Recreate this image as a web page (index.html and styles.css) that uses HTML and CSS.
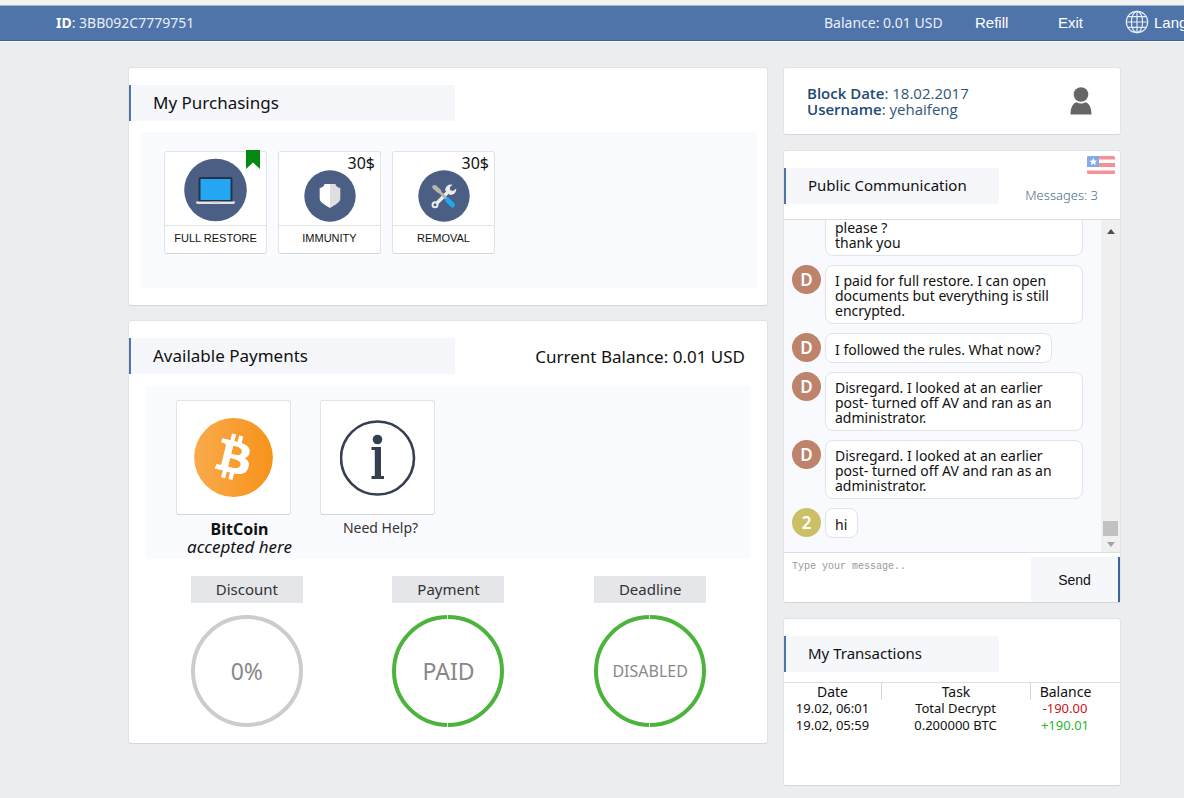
FILE: index.html
```html
<!DOCTYPE html>
<html lang="en">
<head>
<meta charset="utf-8">
<title>My Purchasings</title>
<link rel="stylesheet" href="styles.css">
</head>
<body>
<header class="topbar">
  <p class="account"><strong>ID</strong>: 3BB092C7779751</p>
  <nav class="topnav">
    <span class="balance">Balance: 0.01 USD</span>
    <a class="navlink refill" href="#">Refill</a>
    <a class="navlink exit" href="#">Exit</a>
    <button class="language" type="button">
      <svg width="24" height="24" viewBox="0 0 24 24" fill="none" stroke="#e8eef8" stroke-width="1.2" aria-hidden="true"><circle cx="12" cy="12" r="10.7"/><ellipse cx="12" cy="12" rx="5.6" ry="10.7"/><path d="M12 1.3v21.4M1.3 12h21.4M3 6.6h18M3 17.4h18"/></svg>
      <span>Lang</span>
    </button>
  </nav>
</header>

<main class="page">
  <div class="column main">
    <section class="card purchases">
      <h2 class="title">My Purchasings</h2>
      <div class="goods">
        <button class="good" type="button">
          <span class="pic"><svg width="64" height="64" viewBox="0 0 64 64" aria-hidden="true"><circle cx="31.500" cy="32" r="31.300" fill="#4b5e83"/><rect x="14.500" y="19" width="34" height="25" rx="2" fill="#23344a"/><rect x="16.500" y="21" width="30" height="21" fill="#25a6f2"/><path d="M12 43.500h39v.8q0 1.700-2 1.700h-35q-2 0-2-1.700z" fill="#e4e4e4"/><path d="M26.500 43.500h10v1h-10z" fill="#b9b9b9"/></svg></span>
          <span class="name">FULL RESTORE</span>
          <svg class="flag" width="14" height="19" viewBox="0 0 14 19" aria-hidden="true"><path d="M0 0h14v19l-7-6.500-7 6.500z" fill="#048a14"/></svg>
        </button>
        <button class="good" type="button">
          <span class="pic"><svg width="52" height="52" viewBox="0 0 52 52" aria-hidden="true"><circle cx="26" cy="26" r="25.700" fill="#4b5e83"/><path d="M26 14h-5.500q-.5 3-4.800 4v11q0 3.500 10.300 9z" fill="#fff"/><path d="M26 14h5.500q.5 3 4.800 4v11q0 3.500-10.300 9z" fill="#dfdfdf"/></svg></span>
          <span class="name">IMMUNITY</span>
          <span class="price">30$</span>
        </button>
        <button class="good" type="button">
          <span class="pic"><svg width="52" height="52" viewBox="0 0 52 52" aria-hidden="true"><circle cx="26" cy="26" r="25.700" fill="#4b5e83"/><path d="M18 34 31 21" stroke="#ececec" stroke-width="3.600"/><circle cx="17" cy="34.800" r="2.500" fill="#4b5e83" stroke="#ececec" stroke-width="2"/><path d="M34.500 14.500q-6.500-.8-7.500 5.500l5 5q6.500-.5 6.300-6.500l-3.300 2.500-2.700-.8-.5-2.700z" fill="#ececec"/><path d="m20 20 8.500 9" stroke="#b8b5b1" stroke-width="2.600"/><path d="M14.300 16q2-2 4.500 0l4.200 4 .5 3.500-3.500-.5-4.200-3.500q-2-1.500-1.500-3.500z" fill="#b8b5b1"/><path d="m29.500 30 5 5" stroke="#25a6f2" stroke-width="5" stroke-linecap="round"/></svg></span>
          <span class="name">REMOVAL</span>
          <span class="price">30$</span>
        </button>
      </div>
    </section>

    <section class="card payments">
      <div class="heading">
        <h2 class="title">Available Payments</h2>
        <p class="current">Current Balance: 0.01 USD</p>
      </div>
      <div class="methods">
        <figure class="method">
          <button class="tile" type="button" aria-label="BitCoin">
            <svg width="79" height="79" viewBox="0 0 64 64" aria-hidden="true"><defs><linearGradient id="coin" x1="0" x2="1"><stop offset="0" stop-color="#f9aa4b"/><stop offset="1" stop-color="#f7931a"/></linearGradient></defs><circle cx="32" cy="32" r="31.900" fill="url(#coin)"/><path transform="translate(32 32) scale(.93) translate(-32 -32)" fill="#fff" d="m46.103 27.444c0.637-4.258-2.605-6.547-7.038-8.074l1.438-5.768-3.511-0.875-1.400 5.616c-0.923-0.230-1.871-0.447-2.813-0.662l1.410-5.653-3.509-0.875-1.439 5.766c-0.764-0.174-1.514-0.346-2.242-0.527l0.004-0.018-4.842-1.209-0.934 3.750s2.605 0.597 2.550 0.634c1.422 0.355 1.679 1.296 1.636 2.042l-1.638 6.571c0.098 0.025 0.225 0.061 0.365 0.117-0.117-0.029-0.242-0.061-0.371-0.092l-2.296 9.205c-0.174 0.432-0.615 1.080-1.609 0.834 0.035 0.051-2.552-0.637-2.552-0.637l-1.743 4.019 4.569 1.139c0.850 0.213 1.683 0.436 2.503 0.646l-1.453 5.834 3.507 0.875 1.439-5.772c0.958 0.260 1.888 0.500 2.798 0.726l-1.434 5.745 3.511 0.875 1.453-5.823c5.987 1.133 10.489 0.676 12.384-4.739 1.527-4.360-0.076-6.875-3.226-8.515 2.294-0.529 4.022-2.038 4.483-5.155zm-8.022 11.249c-1.085 4.360-8.426 2.003-10.806 1.412l1.928-7.729c2.380 0.594 10.012 1.770 8.878 6.317zm1.086-11.312c-0.990 3.966-7.100 1.951-9.082 1.457l1.748-7.010c1.982 0.494 8.365 1.416 7.334 5.553z"/></svg>
          </button>
          <figcaption class="coin"><strong>BitCoin</strong><em>accepted here</em></figcaption>
        </figure>
        <figure class="method">
          <button class="tile" type="button" aria-label="Need Help?">
            <svg width="76" height="76" viewBox="0 0 76 76" aria-hidden="true"><circle cx="37.500" cy="38" r="36.500" fill="none" stroke="#343f4f" stroke-width="2.600"/><circle cx="37.500" cy="19.500" r="4.800" fill="#343f4f"/><path d="M31.500 27h9.500v29h3v3h-12.500v-3h3.300v-26h-3.300z" fill="#343f4f"/></svg>
          </button>
          <figcaption class="help">Need Help?</figcaption>
        </figure>
      </div>
      <div class="stats">
        <div class="stat"><h3 class="label">Discount</h3><p class="ring">0%</p></div>
        <div class="stat"><h3 class="label">Payment</h3><p class="ring done">PAID</p></div>
        <div class="stat"><h3 class="label">Deadline</h3><p class="ring done small">DISABLED</p></div>
      </div>
    </section>
  </div>

  <div class="column">
    <section class="card profile">
      <dl class="facts">
        <div><dt>Block Date</dt><dd>: 18.02.2017</dd></div>
        <div><dt>Username</dt><dd>: yehaifeng</dd></div>
      </dl>
      <svg width="22" height="28" viewBox="0 0 22 28" fill="#666" aria-hidden="true"><circle cx="11" cy="7.500" r="7.300"/><path d="M.5 27.500c0-7 2.500-11.500 6-12.300q4.500 2.600 9 0c3.500.8 6 5.300 6 12.300z"/></svg>
    </section>

    <section class="card chat">
      <div class="chathead">
        <h2 class="title narrow">Public Communication</h2>
        <div class="meta">
          <svg width="28" height="18" viewBox="0 0 28 18" aria-hidden="true"><rect width="28" height="18" rx="1.500" fill="#f78f97"/><path d="M0 3.500h28v3.500H0zM0 11h28v3.500H0z" fill="#fff"/><path d="M1.500 0H12v11H0V1.500Q0 0 1.500 0z" fill="#85aae8"/><path d="m6.300 2 1.100 2.400 2.600.3-1.900 1.800.5 2.600-2.300-1.300L4 9.100l.5-2.600-1.900-1.800 2.600-.3z" fill="#fff"/></svg>
          <span>Messages: 3</span>
        </div>
      </div>
      <div class="log">
        <ol class="messages">
          <li class="message"><span class="avatar">D</span><p class="bubble">please ?<br>thank you</p></li>
          <li class="message"><span class="avatar">D</span><p class="bubble">I paid for full restore. I can open<br>documents but everything is still<br>encrypted.</p></li>
          <li class="message"><span class="avatar">D</span><p class="bubble short">I followed the rules. What now?</p></li>
          <li class="message"><span class="avatar">D</span><p class="bubble">Disregard. I looked at an earlier<br>post- turned off AV and ran as an<br>administrator.</p></li>
          <li class="message"><span class="avatar">D</span><p class="bubble">Disregard. I looked at an earlier<br>post- turned off AV and ran as an<br>administrator.</p></li>
          <li class="message"><span class="avatar own">2</span><p class="bubble short">hi</p></li>
        </ol>
        <div class="scroll" aria-hidden="true">
          <svg width="8" height="5" viewBox="0 0 8 5"><path d="M4 0 8 5H0z" fill="#505050"/></svg>
          <span class="thumb"></span>
          <svg width="8" height="5" viewBox="0 0 8 5"><path d="M0 0h8L4 5z" fill="#a3a3a3"/></svg>
        </div>
      </div>
      <form class="compose">
        <textarea class="input" aria-label="Message" placeholder="Type your message.."></textarea>
        <button class="send" type="button">Send</button>
      </form>
    </section>

    <section class="card transactions">
      <h2 class="title narrow">My Transactions</h2>
      <table class="ledger">
        <colgroup><col class="c-date"><col class="c-task"><col class="c-sum"><col></colgroup>
        <thead><tr><th>Date</th><th>Task</th><th>Balance</th><td></td></tr></thead>
        <tbody>
          <tr><td>19.02, 06:01</td><td>Total Decrypt</td><td class="minus">-190.00</td><td></td></tr>
          <tr><td>19.02, 05:59</td><td>0.200000 BTC</td><td class="plus">+190.01</td><td></td></tr>
        </tbody>
      </table>
    </section>
  </div>
</main>
</body>
</html>
```
FILE: styles.css
```css
* { box-sizing: border-box; }

body {
  margin: 0;
  background: #ecedef;
  color: #111;
  font-family: "Noto Sans", "Open Sans", sans-serif;
  font-size: 15px;
  overflow-x: hidden;
}

h2, h3, p, dl, dd, ol, figure { margin: 0; padding: 0; font-weight: 400; }
button { font: inherit; color: inherit; margin: 0; padding: 0; cursor: pointer; }

.topbar {
  display: flex;
  justify-content: space-between;
  align-items: center;
  height: 42px;
  padding: 0 0 2px 56px;
  border-top: 5px solid #f1f1f1;
  border-bottom: 1px solid #f8f9fb;
  background: #4f74aa;
  box-shadow: inset 0 1px #a9b4c4, inset 0 -1px #3f6196;
  color: #e9eff8;
  font-size: 14px;
  overflow: hidden;
}
.account strong { color: #fff; }
.topnav { display: flex; align-items: center; flex-shrink: 0; }
.balance { width: 151px; }
.navlink, .language {
  color: #fff;
  font-family: "Liberation Sans", Arial, sans-serif;
  font-size: 15px;
  text-decoration: none;
}
.refill { width: 83px; }
.exit { width: 67px; }
.language { display: flex; align-items: center; gap: 5px; width: 59px; border: 0; background: none; }
.language svg { flex-shrink: 0; }

.page {
  display: grid;
  grid-template-columns: minmax(0, 1fr) 338px;
  gap: 15px;
  padding: 25px 63px 12px 128px;
}
.column { display: flex; flex-direction: column; gap: 15px; }
.column.main { gap: 14px; }

.card {
  background: #fff;
  border: 1px solid #e1e3e7;
  border-bottom-color: #d3d5da;
  border-radius: 3px;
}

.title {
  width: 326px;
  padding-left: 22px;
  border-left: 2px solid #4f74aa;
  background: #f5f7fb;
  font-size: 17px;
  line-height: 36px;
}
.title.narrow { width: 215px; padding-bottom: 2px; font-size: 15px; line-height: 34px; }

.purchases { padding: 17px 0; }
.goods {
  display: flex;
  gap: 11px;
  min-height: 156px;
  margin: 11px 10px 0 11px;
  padding: 19px 24px;
  background: #fafbff;
}
.good {
  position: relative;
  display: flex;
  flex-direction: column;
  width: 103px;
  height: 103px;
  border: 1px solid #e1e3e7;
  border-bottom-color: #d3d5da;
  border-radius: 3px;
  background: #fff;
}
.pic { display: flex; flex: 1; align-items: flex-end; justify-content: center; padding-bottom: 3px; }
.name {
  width: 100%;
  border-top: 1px solid #e1e3e7;
  color: #111;
  font: 11px/25px "Liberation Sans", Arial, sans-serif;
  padding-bottom: 2px;
}
.flag { position: absolute; top: -2px; right: 6px; }
.price { position: absolute; top: 0; right: 5px; font-size: 16px; line-height: 22px; }

.payments { padding: 17px 0 16px; }
.heading { display: flex; justify-content: space-between; align-items: center; padding-right: 22px; }
.current { font-size: 17px; }
.methods {
  display: flex;
  gap: 29px;
  min-height: 173px;
  margin: 12px 16px 0 17px;
  padding: 14px 30px 0;
  background: #fafbff;
}
.method { width: 115px; }
.tile {
  display: flex;
  align-items: center;
  justify-content: center;
  width: 115px;
  height: 115px;
  border: 1px solid #e1e3e7;
  border-bottom-color: #d3d5da;
  border-radius: 3px;
  background: #fff;
}
.coin, .help { margin: 5px -6px 0 6px; text-align: center; white-space: nowrap; }
.coin strong, .coin em { display: block; font-size: 16px; line-height: 18px; }
.coin em { font-size: 17px; }
.help { margin: 5px -3px 0 3px; color: #333; font-size: 14px; line-height: 16px; }

.stats {
  display: grid;
  grid-template-columns: repeat(3, 1fr);
  margin: 17px 16px 0 17px;
}
.stat { display: flex; flex-direction: column; align-items: center; gap: 12px; }
.label {
  width: 112px;
  background: #e4e6ea;
  color: #333;
  font-size: 15px;
  line-height: 27px;
  text-align: center;
}
.ring {
  position: relative;
  display: flex;
  align-items: center;
  justify-content: center;
  width: 112px;
  height: 112px;
  border: 4px solid #ccc;
  border-radius: 50%;
  color: #888;
  font-size: 23px;
}
.done { border-color: #4cb43c; }
.done::before, .done::after {
  content: "";
  position: absolute;
  left: 51px;
  width: 1px;
  height: 4px;
  background: #d8efd4;
}
.done::before { top: -4px; }
.done::after { bottom: -4px; }
.small { font-size: 16px; }

.profile {
  display: flex;
  align-items: center;
  justify-content: space-between;
  padding: 17px 28px 17px 23px;
}
.facts { color: #2f5578; font: 15px/16px "Open Sans", "Noto Sans", sans-serif; }
.facts dt { display: inline; font-weight: 600; color: #1f4a74; }
.facts dd { display: inline; }

.chathead {
  display: flex;
  justify-content: space-between;
  padding: 17px 5px 15px 0;
  border-bottom: 1px solid #dcdee2;
}
.meta {
  display: flex;
  flex-direction: column;
  align-items: flex-end;
  gap: 12px;
  margin-top: -12px;
  color: #4a6a8a;
  font-size: 13px;
  font-weight: 300;
  line-height: 18px;
  height: 48px;
}
.meta span { padding-right: 17px; }

.log { display: flex; height: 332px; background: #f9fafd; overflow: hidden; }
.messages {
  display: flex;
  flex: 1;
  flex-direction: column;
  justify-content: flex-end;
  gap: 9px;
  padding: 0 8px 14px;
  list-style: none;
  overflow: hidden;
}
.message { display: flex; gap: 4px; flex-shrink: 0; }
.avatar {
  flex-shrink: 0;
  width: 29px;
  height: 29px;
  border-radius: 50%;
  background: #bd836b;
  color: #fff;
  font-size: 17px;
  font-weight: 600;
  line-height: 29px;
  text-align: center;
}
.own { background: #ccc067; }
.bubble {
  width: 258px;
  min-height: 59px;
  padding: 7px 9px 5px;
  border: 1px solid #e1e3ea;
  border-radius: 8px;
  background: #fff;
  font-size: 14px;
  line-height: 15px;
  white-space: nowrap;
}
.message:first-child .bubble { padding-top: 52px; }
.short { width: auto; min-height: 30px; padding: 8px 10px 5px 9px; }
.scroll {
  display: flex;
  flex-direction: column;
  align-items: center;
  width: 19px;
  padding: 9px 0 5px;
  background: #f0f0f0;
}
.thumb { width: 15px; height: 15px; margin: auto 0 6px; background: #c1c1c1; }

.compose { display: flex; height: 50px; border-top: 1px solid #dcdee2; }
.input {
  flex: 1;
  min-width: 0;
  padding: 8px;
  border: 0;
  outline: 0;
  resize: none;
  background: transparent;
  font: 10px/12px "Liberation Mono", monospace;
}
.input::placeholder { color: #999; }
.send {
  width: 89px;
  margin-top: 4px;
  border: 0;
  border-right: 2px solid #3c62a0;
  background: #f5f7fb;
  font: 14px "Liberation Sans", Arial, sans-serif;
}

.transactions { min-height: 168px; padding-top: 17px; }
.ledger {
  width: 100%;
  margin-top: 10px;
  border-top: 1px solid #dcdee2;
  border-collapse: separate;
  border-spacing: 0;
  table-layout: fixed;
  font-size: 13px;
  line-height: 17px;
  text-align: center;
}
.ledger th, .ledger td { padding: 0; font-weight: 400; }
.ledger th { font-size: 14px; }
.ledger th + th { border-left: 1px solid #d5d7db; }
.c-date { width: 97px; }
.c-task { width: 149px; }
.c-sum { width: 70px; }
.minus { color: #c9141b; }
.plus { color: #2db32d; }
```
